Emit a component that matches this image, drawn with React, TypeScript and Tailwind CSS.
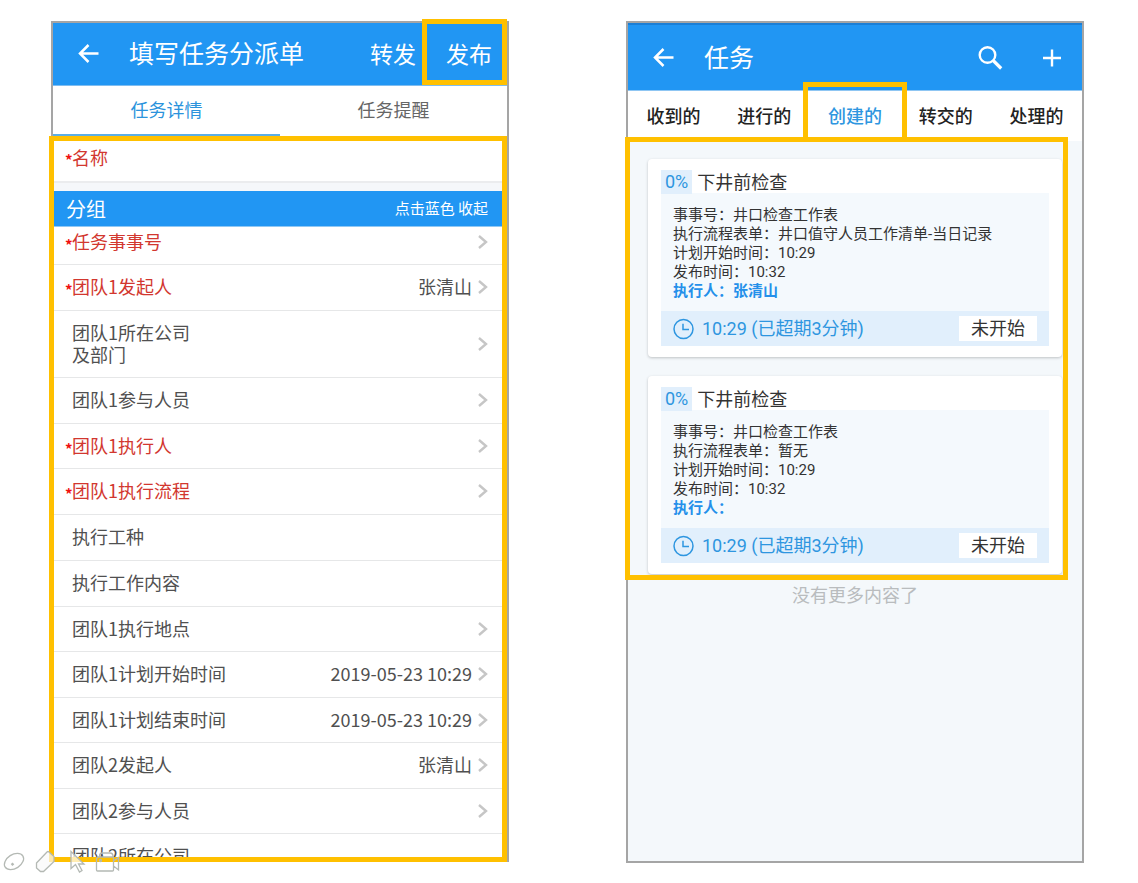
import React from "react";

type FieldType = {
    label: string;
    kind: "text" | "picker";
    value?: string;
    required?: boolean;
};

type TaskType = {
    title: string;
    form: string;
    assignee: string;
};

const fields: FieldType[] = [
    { label: "任务事事号", kind: "picker", required: true },
    { label: "团队1发起人", kind: "picker", value: "张清山", required: true },
    { label: "团队1所在公司\n及部门", kind: "picker" },
    { label: "团队1参与人员", kind: "picker" },
    { label: "团队1执行人", kind: "picker", required: true },
    { label: "团队1执行流程", kind: "picker", required: true },
    { label: "执行工种", kind: "text" },
    { label: "执行工作内容", kind: "text" },
    { label: "团队1执行地点", kind: "picker" },
    { label: "团队1计划开始时间", kind: "picker", value: "2019-05-23 10:29" },
    { label: "团队1计划结束时间", kind: "picker", value: "2019-05-23 10:29" },
    { label: "团队2发起人", kind: "picker", value: "张清山" },
    { label: "团队2参与人员", kind: "picker" },
    { label: "团队2所在公司\n及部门", kind: "picker" },
];

const tasks: TaskType[] = [
    {
        title: "下井前检查",
        form: "井口值守人员工作清单-当日记录",
        assignee: "张清山",
    },
    { title: "下井前检查", form: "暂无", assignee: "" },
];

const taskTabs = ["收到的", "进行的", "创建的", "转交的", "处理的"];

const BackIcon = () => (
    <svg width="22" height="22" viewBox="0 0 22 22" fill="none" stroke="currentColor" strokeWidth="2.5">
        <path d="M21.500 10.500H3M11.500 2L3 10.500l8.500 8.500" />
    </svg>
);

const SearchIcon = () => (
    <svg width="26" height="26" viewBox="0 0 26 26" fill="none" stroke="currentColor">
        <circle cx="9.5" cy="10" r="7.8" strokeWidth="2.4" />
        <path d="M15.2 15.5l8 8" strokeWidth="3.2" />
    </svg>
);

const PlusIcon = () => (
    <svg width="20" height="20" viewBox="0 0 20 20" fill="none" stroke="currentColor" strokeWidth="2.4">
        <path d="M1 10h18M10 1.5v17" />
    </svg>
);

const ChevronIcon = () => (
    <svg className="shrink-0" width="10" height="14" viewBox="0 0 10 14" fill="none" stroke="#c6c6c6" strokeWidth="2.4">
        <path d="M1 1l7 6-7 6" />
    </svg>
);

const ClockIcon = () => (
    <svg width="22" height="22" viewBox="0 0 22 22" fill="none" stroke="currentColor" strokeWidth="1.5">
        <circle cx="10.5" cy="11" r="9.5" />
        <path d="M10 5.8v5.7h6" />
    </svg>
);

const RequiredMark = ({ show }: { show?: boolean }) => (
    <span className="w-[7px] shrink-0 pt-[6px] text-[15px] leading-[22px] font-bold text-[#f01010]">
        {show && "*"}
    </span>
);

const FieldRow = ({ label, kind, value, required }: FieldType) => {
    const labelClass = required
        ? "whitespace-pre-line text-left text-[#d2372f]"
        : "whitespace-pre-line text-left text-[#505050]";

    if (kind === "text") {
        return (
            <li className="flex h-[46px] items-center border-b border-[#e6e7e8] pr-[19px] pb-1 pl-3 text-lg leading-[22px]">
                <RequiredMark show={required} />
                <label htmlFor={label} className={labelClass}>
                    {label}
                </label>
                <input id={label} type="text" className="ml-3 min-w-0 flex-1 outline-none" />
            </li>
        );
    }

    return (
        <li className="min-h-[45px] border-b border-[#e6e7e8] even:min-h-[46px]">
            <button className="flex min-h-[44px] w-full items-center pr-[19px] pl-3 text-lg leading-[22px]">
                <RequiredMark show={required} />
                <span className={labelClass + (label.includes("\n") ? " pt-[10px] pb-3" : " pb-[2px]")}>
                    {label}
                </span>
                <span className="mr-[6px] ml-auto pb-[2px] text-[#505050]">{value}</span>
                <ChevronIcon />
            </button>
        </li>
    );
};

const DispatchForm = () => (
    <section className="flex h-[calc(100vh-42px)] min-w-0 flex-1 flex-col border-2 border-[#a5a5a5] bg-white">
        <header className="flex h-[63px] shrink-0 items-stretch border-b border-[#7fbdf0] bg-[#2196f3] text-white">
            <button aria-label="返回" className="pl-6">
                <BackIcon />
            </button>
            <h1 className="flex flex-1 items-center pb-[2px] pl-[30px] text-[25px] whitespace-nowrap">
                填写任务分派单
            </h1>
            <button className="pr-[6px] pb-[2px] text-[23px]">转发</button>
            <button className="relative pr-[15px] pb-[2px] pl-6 text-[23px]">
                发布
                <span className="pointer-events-none absolute -top-1 right-0 bottom-0 left-0 border-5 border-[#ffc000]" />
            </button>
        </header>
        <nav className="grid h-[50px] shrink-0 grid-cols-2 text-lg">
            <button className="border-b-2 border-[#5aaee6] pb-[2px] text-[#2b93dc]">任务详情</button>
            <button className="border-b-2 border-transparent pb-[2px] text-[#666666]">任务提醒</button>
        </nav>
        <div className="relative min-h-0 flex-1">
            <div className="h-full overflow-hidden">
                <div className="flex h-[47px] items-center border-b-2 border-[#ebecee] pr-[19px] pb-1 pl-3 text-lg leading-[22px]">
                    <RequiredMark show />
                    <label htmlFor="name" className="text-[#d2372f]">
                        名称
                    </label>
                    <input id="name" type="text" className="ml-3 min-w-0 flex-1 outline-none" />
                </div>
                <div className="h-2 bg-[#f5f7fa]" />
                <button className="relative z-10 flex h-9 w-full items-center justify-between border-b border-[#90c8f4] bg-[#2196f3] pr-[19px] pl-[13px] text-white">
                    <span className="text-xl">分组</span>
                    <span className="text-[15px]">点击蓝色 收起</span>
                </button>
                <ul className="-mt-[7px]">
                    {fields.map((field) => (
                        <FieldRow key={field.label} {...field} />
                    ))}
                </ul>
            </div>
            <div className="pointer-events-none absolute top-0 right-0 -bottom-[2px] -left-1 z-20 border-5 border-[#ffc000]" />
        </div>
    </section>
);

const TaskCard = ({ title, form, assignee }: TaskType) => (
    <article className="rounded-sm bg-white px-[13px] pt-3 pb-[11px] shadow-[0_1px_3px_rgba(0,0,0,0.22)]">
        <h2 className="flex h-[22px] items-center text-lg leading-6 text-[#333333]">
            <span className="mr-[5px] bg-[#e1effc] px-1 text-[#2e96e0]">0%</span>
            <span className="pt-[2px]">{title}</span>
        </h2>
        <div className="bg-[#f4f9fd] px-3 pt-[13px] pb-[10px] text-[15px] leading-[19px] text-[#333333]">
            <p>事事号：井口检查工作表</p>
            <p>执行流程表单：{form}</p>
            <p>计划开始时间：10:29</p>
            <p>发布时间：10:32</p>
            <p className="font-bold text-[#2490ea]">执行人：{assignee}</p>
        </div>
        <div className="flex h-[35px] items-center bg-[#e1effc] px-3 text-lg text-[#2e96e0]">
            <ClockIcon />
            <span className="ml-[7px] pt-px">10:29 (已超期3分钟)</span>
            <button className="ml-auto bg-white px-3 leading-[25px] text-[#333333]">未开始</button>
        </div>
    </article>
);

const TaskList = () => (
    <section className="flex h-[calc(100vh-41px)] min-w-0 flex-1 flex-col border-2 border-[#a5a5a5] bg-[#f4f8fb] font-['Roboto','Noto_Sans_CJK_SC',sans-serif]">
        <header className="flex h-[68px] shrink-0 items-center border-t-2 border-b border-t-[#1b7fd6] border-b-[#8fc6f3] bg-[#2196f3] pr-5 pl-6 text-white">
            <button aria-label="返回">
                <BackIcon />
            </button>
            <h1 className="flex-1 pt-[2px] pl-[30px] text-[25px]">任务</h1>
            <button aria-label="搜索" className="mr-[38px]">
                <SearchIcon />
            </button>
            <button aria-label="新建">
                <PlusIcon />
            </button>
        </header>
        <nav className="grid h-[50px] shrink-0 grid-cols-5 bg-white text-lg font-medium text-[#222222]">
            {taskTabs.map((tab) =>
                tab === "创建的" ? (
                    <button key={tab} className="relative pt-[2px] text-[#2e96e0]">
                        {tab}
                        <span className="pointer-events-none absolute -inset-x-[7px] -top-[9px] -bottom-px border-5 border-[#ffc000]" />
                    </button>
                ) : (
                    <button key={tab} className="pt-[2px]">
                        {tab}
                    </button>
                ),
            )}
        </nav>
        <div className="relative flex flex-col gap-[19px] px-5 pt-[18px]">
            {tasks.map((task) => (
                <TaskCard key={task.form} {...task} />
            ))}
            <div className="pointer-events-none absolute -top-1 right-[14px] -bottom-[6px] -left-[3px] border-5 border-[#ffc000]" />
        </div>
        <p className="pt-2 text-center text-lg text-[#b9bcbe]">没有更多内容了</p>
    </section>
);

// Slideshow tools: pen, eraser, pointer, camera
const PresenterTools = () => (
    <svg
        className="pointer-events-none absolute bottom-2 left-0 z-30"
        width="124"
        height="26"
        viewBox="0 0 124 26"
        fill="none"
        stroke="#b4b9b4"
        strokeWidth="1.3"
    >
        <ellipse cx="14" cy="12.5" rx="10.5" ry="7" transform="rotate(-33 14 12.5)" />
        <path d="M11.5 16l2-1.5" strokeWidth="2.5" />
        <path d="M36.5 14L47 3q1-1 2 0l5 4.500v5L43.500 22.500h-3L36.500 19z" fill="#fafafa" fillOpacity="0.7" />
        <path d="M71 2.5v17l4.500-4 4 7.500 2.500-1.500-3.500-6.500h5.500z" fill="#ffffff" fillOpacity="0.7" />
        <path d="M98.5 8h14q1 0 1 1v12q0 1-1 1H97.500q-1 0-1-1V9.500zM113.500 12l5-3.500v12.500l-5-4M99.500 7.500q0-3.500 3-3.500h7.500q3 0 3 3.500" />
        <circle cx="100.5" cy="11.5" r="1" />
    </svg>
);

export default function App() {
    return (
        <main className="relative flex min-h-screen items-start gap-[117px] bg-white pt-[21px] pr-[54px] pl-[51px] font-['Noto_Sans_CJK_SC',sans-serif]">
            <DispatchForm />
            <TaskList />
            <PresenterTools />
        </main>
    );
}
